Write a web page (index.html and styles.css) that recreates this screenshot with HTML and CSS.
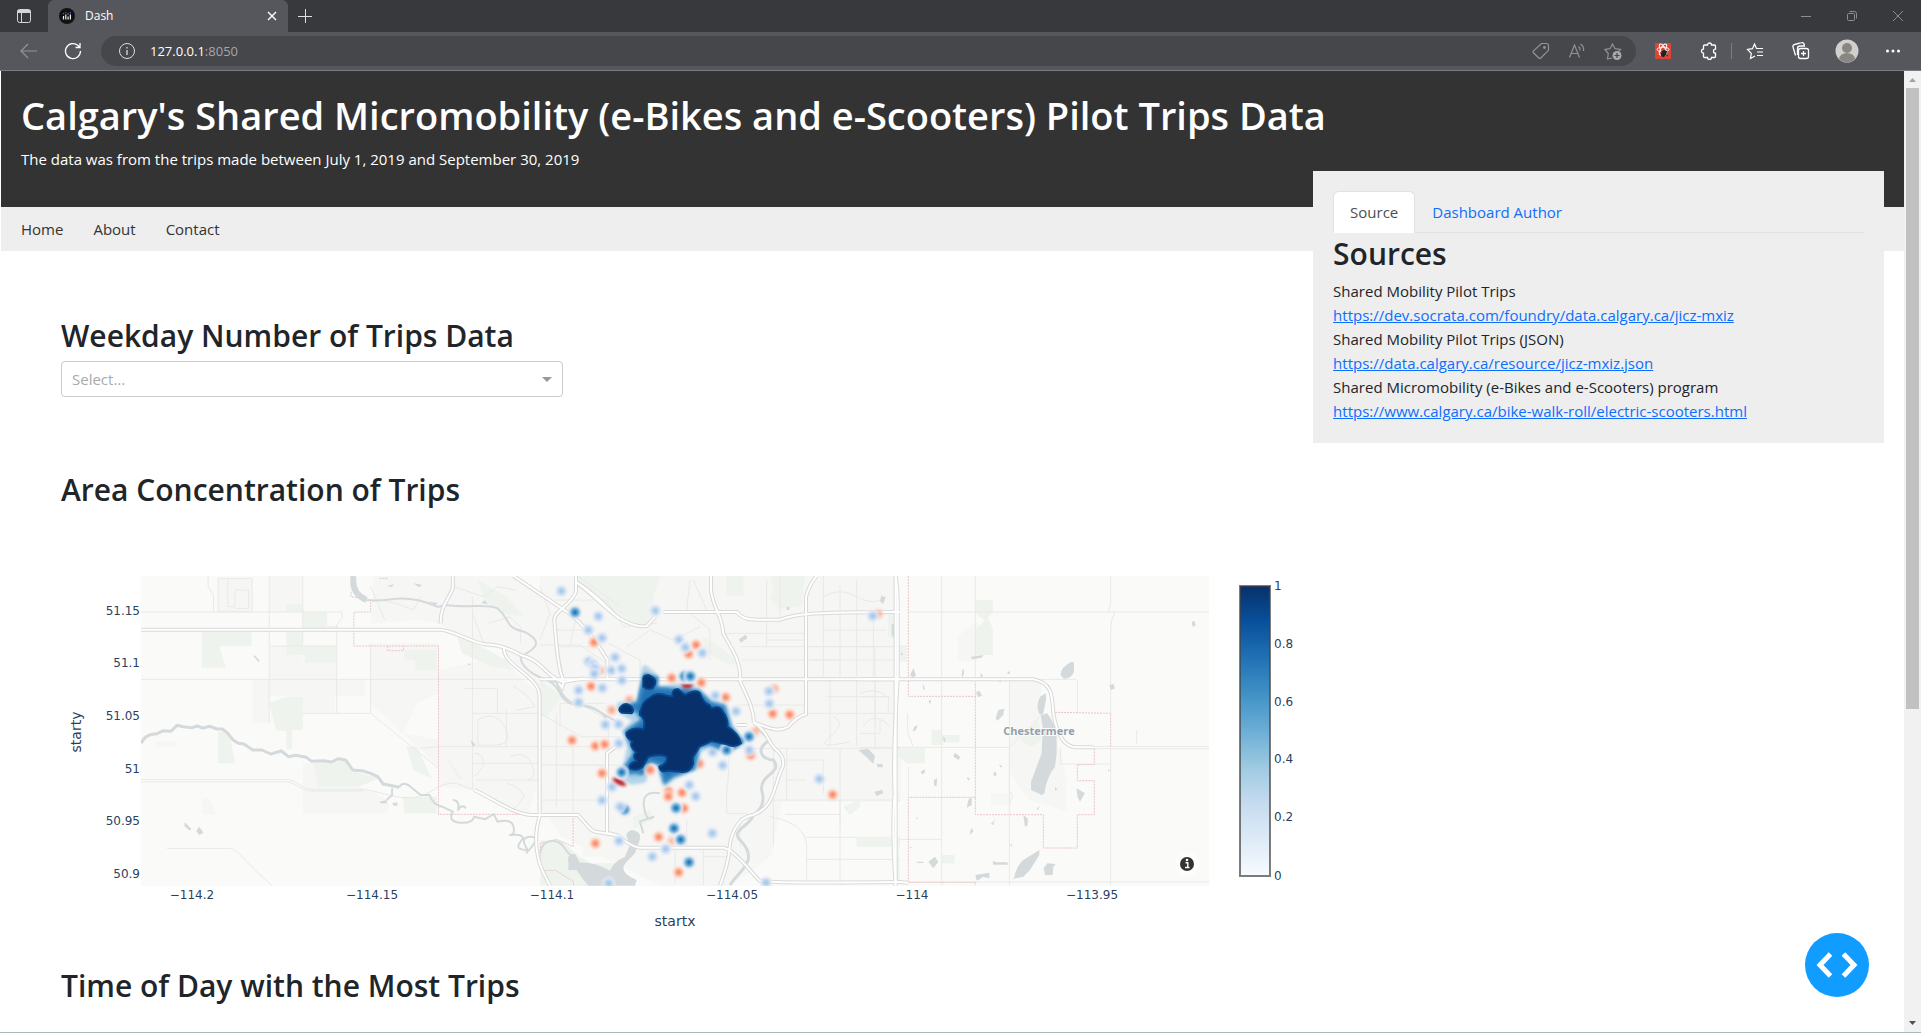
FILE: index.html
```html
<!DOCTYPE html>
<html lang="en">
<head>
<meta charset="utf-8">
<title>Dash</title>
<link rel="stylesheet" href="styles.css">
</head>
<body>
<div class="browser">
  <div class="titlebar">
    <button class="tab-menu" aria-label="Tab actions"><svg width="16" height="16" viewBox="0 0 16 16" fill="none" stroke="#d6d6d6"><rect x="1.500" y="1.500" width="13" height="13" rx="2"/><path d="M2 2.500h12v2H2z" fill="#d6d6d6"/><path d="M5.500 5v9"/></svg></button>
    <div class="tab">
      <svg width="16" height="16" viewBox="0 0 16 16"><circle cx="8" cy="8" r="8" fill="#111"/><path d="M4.500 8v3.500M6.800 6.500v5M9.100 8.500v3M11.400 6.500v5" stroke="#eee" stroke-width="1.200"/><path d="M4.500 5.200v1M6.800 4.200v1" stroke="#d65a86" stroke-width="1.200"/><path d="M9.100 5.200v1.500M11.400 4.200v1" stroke="#7a70e0" stroke-width="1.200"/></svg>
      <span class="tab-name">Dash</span>
      <button class="tab-close" aria-label="Close tab"><svg width="16" height="16" viewBox="0 0 16 16" stroke="#fff" stroke-width="1.400"><path d="M4 4l8 8M12 4l-8 8"/></svg></button>
    </div>
    <button class="new-tab" aria-label="New tab"><svg width="16" height="16" viewBox="0 0 16 16" stroke="#e0e0e0"><path d="M8.500 1v14M1 8.500h14"/></svg></button>
    <div class="window-buttons">
      <button aria-label="Minimize"><svg width="12" height="12" viewBox="0 0 12 12" stroke="#8d8e91"><path d="M1 6.500h10"/></svg></button>
      <button aria-label="Restore"><svg width="12" height="12" viewBox="0 0 12 12" fill="none" stroke="#8d8e91"><rect x="1.500" y="3.500" width="7" height="7" rx="1"/><path d="M3.500 1.500h5a2 2 0 0 1 2 2v5"/></svg></button>
      <button aria-label="Close"><svg width="12" height="12" viewBox="0 0 12 12" stroke="#8d8e91"><path d="M1 1l10 10M11 1L1 11"/></svg></button>
    </div>
  </div>
  <div class="toolbar">
    <button class="nav-button" aria-label="Back"><svg width="18" height="18" viewBox="0 0 18 18" fill="none" stroke="#939498" stroke-width="1.200"><path d="M17 9H1M8 2L1 9l7 7"/></svg></button>
    <button class="nav-button" aria-label="Refresh"><svg width="18" height="18" viewBox="0 0 18 18" fill="none" stroke="#fff" stroke-width="1.300"><path d="M16.500 9A7.500 7.500 0 1 1 14 3.500L16 5.500M16 1v4.500h-4.500"/></svg></button>
    <div class="address">
      <svg width="18" height="18" viewBox="0 0 18 18" fill="none" stroke="#dcdcdc"><circle cx="9" cy="9" r="7.500"/><path d="M9 8v5M9 5v1.500" stroke-width="1.300"/></svg>
      <span class="url">127.0.0.1<span class="port">:8050</span></span>
      <button class="address-button" aria-label="Shopping"><svg width="18" height="18" viewBox="0 0 18 18" fill="none" stroke="#929396" stroke-width="1.200"><path d="M9.500 1.500h5a2 2 0 0 1 2 2v4.800L8.800 16a1.500 1.500 0 0 1-2 0L1.500 10.800a1.500 1.500 0 0 1 0-2z"/><circle cx="12.500" cy="5.500" r=".8" fill="#929396"/></svg></button>
      <button class="address-button" aria-label="Read aloud"><svg width="18" height="18" viewBox="0 0 18 18" fill="none" stroke="#929396" stroke-width="1.200"><path d="M1.500 15.500L6.500 3l5 12.500M3.200 11.500h6.600M10.500 4.500a4 4 0 0 1 1.500 4M12.500 2a7 7 0 0 1 3 7"/></svg></button>
      <button class="address-button" aria-label="Add favorite"><svg width="18" height="18" viewBox="0 0 18 18"><path d="M8 16l-4.500 1 .8-5.500L1 7.500l5-.8L8.500 2 11 6.700l5.500.8-2 2" fill="none" stroke="#929396" stroke-width="1.200"/><circle cx="13" cy="13.500" r="4.500" fill="#a7a8aa"/><path d="M10.500 13.500h5M13 11v5" stroke="#46474b" stroke-width="1.200"/></svg></button>
    </div>
    <button class="tool-button" aria-label="React extension"><svg width="16" height="16" viewBox="0 0 16 16"><path d="M0 0h16v16H0z" fill="#db4535"/><g fill="none" stroke="#fff"><ellipse cx="8" cy="6.500" rx="6" ry="2.300"/><ellipse cx="8" cy="6.500" rx="6" ry="2.300" transform="rotate(60 8 6.500)"/><ellipse cx="8" cy="6.500" rx="6" ry="2.300" transform="rotate(120 8 6.500)"/></g><ellipse cx="9" cy="10.500" rx="2.600" ry="3.600" fill="#222" transform="rotate(25 9 10)"/><path d="M6 8l7 5M12 8l-5 6" stroke="#222"/></svg></button>
    <button class="tool-button puzzle" aria-label="Extensions"><svg width="18" height="18" viewBox="0 0 18 18" fill="none" stroke="#fff" stroke-width="1.300"><path d="M4.500 3h3a2 2 0 0 1 4 0h3a1 1 0 0 1 1 1v3.200a2 2 0 1 0 0 4v3.300a1 1 0 0 1-1 1h-3a2 2 0 0 1-4 0h-3a1 1 0 0 1-1-1v-3.300a2 2 0 0 1 0-4V4a1 1 0 0 1 1-1z"/></svg></button>
    <button class="tool-button" aria-label="Favorites"><svg width="18" height="18" viewBox="0 0 18 18" fill="none" stroke="#fff" stroke-width="1.200"><path d="M9 14l-4.500 2.500.8-5L1.500 7.500l5-.8L8.500 2l2 4.500h6.500M11 10h6M11 13.500h6"/></svg></button>
    <button class="tool-button" aria-label="Collections"><svg width="20" height="20" viewBox="0 0 20 20" fill="none" stroke="#fff" stroke-width="1.300"><path d="M4.500 14.500L2 6a2 2 0 0 1 1.500-2.500l7-1.800A2 2 0 0 1 13 3l.5 1.500M6.500 14V7.500a2.500 2.500 0 0 1 2.500-2.500h5"/><rect x="7.500" y="7.500" width="10" height="10" rx="2"/><path d="M12.500 10v5M10 12.500h5"/></svg></button>
    <button class="tool-button" aria-label="Profile"><svg width="24" height="24" viewBox="0 0 24 24"><circle cx="12" cy="12" r="11.500" fill="#d2d0ce"/><circle cx="12" cy="9" r="5" fill="#8a8681"/><path d="M4 20a8 6 0 0 1 16 0 11.500 11.500 0 0 1-16 0z" fill="#8a8681"/></svg></button>
    <button class="tool-button" aria-label="Settings and more"><svg width="16" height="16" viewBox="0 0 16 16" fill="#fff"><circle cx="2.500" cy="8" r="1.500"/><circle cx="8" cy="8" r="1.500"/><circle cx="13.500" cy="8" r="1.500"/></svg></button>
  </div>

  <div class="viewport">
    <main class="page">
      <header class="banner">
        <h1>Calgary's Shared Micromobility (e-Bikes and e-Scooters) Pilot Trips Data</h1>
        <p>The data was from the trips made between July 1, 2019 and September 30, 2019</p>
      </header>
      <nav class="menu"><a href="#home">Home</a><a href="#about">About</a><a href="#contact">Contact</a></nav>

      <aside class="source-card">
        <div class="card-tabs"><a class="active" href="#source">Source</a><a href="#author">Dashboard Author</a></div>
        <h2>Sources</h2>
        <p>Shared Mobility Pilot Trips</p>
        <p><a href="https://dev.socrata.com/foundry/data.calgary.ca/jicz-mxiz">https://dev.socrata.com/foundry/data.calgary.ca/jicz-mxiz</a></p>
        <p>Shared Mobility Pilot Trips (JSON)</p>
        <p><a href="https://data.calgary.ca/resource/jicz-mxiz.json">https://data.calgary.ca/resource/jicz-mxiz.json</a></p>
        <p>Shared Micromobility (e-Bikes and e-Scooters) program</p>
        <p><a href="https://www.calgary.ca/bike-walk-roll/electric-scooters.html">https://www.calgary.ca/bike-walk-roll/electric-scooters.html</a></p>
      </aside>

      <div class="content">
        <section class="weekday">
          <h2><label for="weekday">Weekday Number of Trips Data</label></h2>
          <select id="weekday" class="dropdown"><option>Select...</option></select>
        </section>
        <section>
          <h2>Area Concentration of Trips</h2>
          <svg class="chart" viewBox="61 515 1300 452" width="1300" height="452" role="img" aria-label="Density map of trip starts">
            <defs>
              <linearGradient id="blues" x1="0" y1="1" x2="0" y2="0"><stop offset="0" stop-color="#f7fbff"/><stop offset=".125" stop-color="#deebf7"/><stop offset=".25" stop-color="#c6dbef"/><stop offset=".375" stop-color="#9ecae1"/><stop offset=".5" stop-color="#6baed6"/><stop offset=".625" stop-color="#4292c6"/><stop offset=".75" stop-color="#2171b5"/><stop offset=".875" stop-color="#08519c"/><stop offset="1" stop-color="#08306b"/></linearGradient>
              <radialGradient id="low"><stop offset="0" stop-color="#a0c6e6"/><stop offset=".3" stop-color="#b4d0ed" stop-opacity=".9"/><stop offset=".65" stop-color="#dce7f8" stop-opacity=".75"/><stop offset="1" stop-color="#f3eff4" stop-opacity="0"/></radialGradient>
              <radialGradient id="mid"><stop offset="0" stop-color="#1b6aaf"/><stop offset=".3" stop-color="#529dcc"/><stop offset=".55" stop-color="#a6cce9"/><stop offset=".75" stop-color="#e0e8f6" stop-opacity=".7"/><stop offset="1" stop-color="#fbe6df" stop-opacity="0"/></radialGradient>
              <radialGradient id="hot"><stop offset="0" stop-color="#fa8161"/><stop offset=".35" stop-color="#fca488" stop-opacity=".9"/><stop offset=".7" stop-color="#fdd9cb" stop-opacity=".6"/><stop offset="1" stop-color="#fdece4" stop-opacity="0"/></radialGradient>
              <filter id="soft" x="-20%" y="-20%" width="140%" height="140%"><feGaussianBlur stdDeviation="4"/></filter>
              <clipPath id="frame"><path d="M0 0h1068v310H0z"/></clipPath>
              <circle id="l" r="24" fill="url(#low)"/><circle id="m" r="26" fill="url(#mid)"/><circle id="h" r="24" fill="url(#hot)"/>
              <g id="major">
                <g transform="scale(.35714 .33333) translate(-227 -48)"><path d="M227 209H1065C1105 212 1140 243 1190 253Q1240 254 1290 285C1350 300 1360 350 1408 366L1470 355M1100 48V85C1085 125 1065 140 1066 190M1243 262C1240 320 1343 345 1343 410V770C1325 830 1335 890 1350 930L1372 977M1270 48L1405 145C1460 180 1500 240 1533 300V357L1600 358M1445 48V95C1430 140 1385 150 1384 180C1390 240 1392 320 1411 365L1406 383L1398 371M1160 690C1220 720 1265 760 1320 765L1450 765C1475 790 1485 815 1500 815L1568 827M1445 66C1490 100 1530 150 1568 175M1568 550L1532 580V820"/></g>
                <g transform="translate(399 -16) scale(.33333)"><path d="M108 66C150 90 190 130 230 170C270 195 300 202 320 198L346 170M370 156H590C610 180 625 180 720 179C760 165 780 156 1080 156M513 48V90C520 150 545 160 550 220C570 260 605 300 601 365C620 410 640 440 642 488M0 358H1080M642 488C690 520 680 550 715 575Q735 595 728 620C700 680 705 740 640 765C590 770 570 830 568 870Q565 910 540 977M568 870C610 900 640 945 660 963Q700 970 1080 966M205 820C240 820 265 862 300 863H550L568 870M620 495H590M642 488C680 500 710 520 745 500Q770 470 798 462V110Q810 70 830 48M1067 48V977"/></g>
                <g transform="translate(719 -16) scale(.33333)"><path d="M107 48Q115 100 113 155V358Q98 600 104 700Q95 800 107 977M0 358H520C580 370 576 410 580 460C590 520 610 562 650 562H700M107 965L145 968"/></g>
              </g>
            </defs>

            <g transform="translate(141 576)" clip-path="url(#frame)">
              <path d="M0 0h1068v310H0z" fill="#fafaf8"/>
              <g class="urban">
                <g transform="scale(.35714 .33333) translate(-227 -48)"><path d="M443 55h95v100h-95zM586 258h94v40h95v60h80v50h-85v50h-90v-50h-94zM586 48h94v108h-94zM680 610h60l60 60 60 20 60 30v40H680zM540 360h46v130h-46zM398 715h20l18 48h-38zM268 545h60l-8 15h-52zM870 250H1060V400L1000 430 960 520 1060 540V620L1000 560 870 430zM880 48H1270L1400 145 1380 180 1395 350 1340 380 1240 270 1190 250 1080 205 1060 190 1000 180 870 190zM1060 330L1230 290 1340 400V660L1310 765H1280L1160 690 1060 680zM1345 400L1568 480V830H1500L1450 765 1345 750zM1465 820h103v70h-103z"/></g>
                <path d="M399 0H570L660 130 630 280 590 310H520L420 260 399 230zM570 0H756V226H700L640 170 600 170V130zM600 170H760V226H640zM868 105h32v30q20 30 25 70v30l-35-10q-10-10-22-30zM850 217h20v12h-20zM817 60l20-15v40h-20z"/>
              </g>
              <g class="parks">
                <g transform="scale(.35714 .33333) translate(-227 -48)"><path d="M397 215H537V258H445L465 323H397zM634 132h46v24h-46zM680 156h68v42h30v17h-98zM634 215h46v43h94v50h-88v-24h-52zM586 430l48-20h46v100h-30v56h-16v-54h-28zM443 515h30l18 95h-48zM710 610L800 600l25 35 70 20-60 25h-110zM1110 220l140 80 20 30-60-10-85-40zM1170 60l80 50 50 60-60-10-50-40zM970 560h30l40 95-50-25zM960 710h95v50h-90zM1345 840l60 10 30 60 133 0v67H1345zM1080 590l50 70-15-5zM965 270h90v60h-60v-30h-30zM1345 360l60 50-40 60-20-5z"/></g>
                <g transform="translate(399 -16) scale(.33333)"><path d="M115 48H360L340 110Q345 150 320 195 280 195 250 170 200 140 115 66zM560 48h50v60h-50zM690 48h105l-10 90-65 10-30-30 10-30zM490 230q70 40 105 80l-20 5q-50-15-85-50zM280 770l50-20 10 30-60 25zM910 740l50-20v20l-30 25zM950 830h130v30H950zM0 860l60-20 60 50 80 50-50 37H30z"/></g>
                <g transform="translate(719 -16) scale(.33333)"><path d="M346 120h52v40l-15 15 15 30v80h-50v-78l25-25-27-25zM115 255h26v50h-26zM215 510h30v45h-30zM245 525h53v22h-53zM115 565h80v45h-55l-25-20zM0 840h110v20H0zM245 885h38v25h-38zM480 540l20-30 35-30 10 60-30 20zM85 160h20v80l-20-10zM105 860h10l5 100h-10z"/></g>
              </g>
              <g class="streets">
                <g transform="scale(.35714 .33333) translate(-227 -48)"><path d="M415 48V80L430 105V155M443 55h95v100h-95zM470 55v85h20V90h38v55h-38M227 156H790V175L775 195V460M586 48V490M680 48V250M227 358H1330M586 258H775M680 460H870V250M870 460L1060 625M227 659H640C670 665 680 690 710 688H850C900 695 930 715 990 714C1050 700 1060 665 1110 670L1160 690M227 666H637C665 670 675 695 710 693H850M300 865H480C510 880 520 910 595 977M1155 110V690M1155 460H1340M1010 565L1060 560H1340M1155 610H1340M1130 385H1225V460M1250 450V560M1165 660H1340M1390 460V740M1437 560V760M1343 460L1460 530H1568M1343 560H1500M1390 615H1568M1450 48L1568 140M1390 210H1500M1400 260H1500M1155 160L1190 260M1170 480q50-30 75 20t-20 55H1170zM1160 580q30 0 25 40l-25 30M1260 590q40-20 60 20t-10 50M1250 670q40 10 50 40l-30 40M1270 380q40 20 60 60l-50 10M1200 190l60-20 30 30v50M870 80l40 100M900 120q50 10 90 30l20-40M1105 80l80 30 40-30 50 10"/></g>
                <g transform="translate(399 -16) scale(.33333)"><path d="M0 255H120L200 310M45 120H200L250 200 350 190M110 160L90 260M200 430H60V500M205 570V480L100 420M0 615H205M0 720H205V820M205 250L300 300V365M260 260L330 210 400 240 480 200M450 60L440 150 510 210V300M460 60L500 150M545 220H800M600 260H1000M605 300H900M600 435H800M560 565H1080M565 565Q570 620 560 700V760H620M405 860V970M490 860V977M440 780V860M700 565V860M740 565V720M735 763H900M740 660H800M700 720H1080M690 770Q800 790 800 860V970M800 832H950M900 565V977M900 720V800M800 898H1080M680 240H800M680 60V260M720 48V180M850 48V350M900 80V350M950 60V350M1000 160V350M850 110Q900 80 950 110T1040 110M850 210H1040M810 260H1060M820 300H1060M870 360V560M950 360V560M1005 360V560M800 460H1060M860 410H1050M880 470Q920 490 870 530T930 545M960 400Q1010 380 1040 410M970 500Q1000 450 1050 500M740 600H850V700M0 80L30 160 0 240M600 770V860M490 890H560"/></g>
                <g transform="translate(719 -16) scale(.33333)"><path d="M145 156H1047M245 48V838M346 48V370M448 365V977M752 48V130L745 156M765 156Q750 180 752 210V460M652 360V460M540 358H650M0 562H448L540 470M120 838H245V977M145 966H1047M752 565V977M602 565V612H752M143 460V520L160 560M448 565V690L458 710 448 730M830 510V550M145 712V620M0 260H100M45 260V500M0 520H60V480M0 410H85V460M690 559H1047M690 566H1047"/></g>
              </g>
              <g class="city-limit">
                <g transform="scale(.35714 .33333) translate(-227 -48)"><path d="M815 95V110L870 120V156H823V258H1060V763H1290M918 258V272L962 272V258M895 55H920M1437 765V860L1390 838 1345 850V905M1350 931H1388L1438 965V977"/></g>
                <g transform="translate(719 -16) scale(.33333)"><path d="M145 48V409H346V370M346 409V764H550V864H652V764H703V662H652V614H703V565M346 712H145V967H346V977M585 457L752 460V560"/></g>
              </g>
              <g class="rivers">
                <g transform="scale(.35714 .33333) translate(-227 -48)">
                  <path class="wide" d="M822 48Q815 100 858 120"/>
                  <path d="M858 120C920 128 935 105 1000 120S1040 148 1080 135C1150 145 1195 130 1225 145C1265 180 1240 200 1300 215C1355 245 1335 265 1290 290C1290 330 1350 360 1390 366C1400 400 1420 425 1450 435C1500 440 1530 470 1568 490"/>
                  <path class="medium" d="M227 550Q240 520 270 522L290 512 310 514 328 496 345 500 370 503 385 498 400 504 420 499 440 507 455 507 470 520 485 540 500 550 515 552 540 570 565 570 590 582 620 573 640 590 660 586 690 592 705 604 740 602 760 606 780 596 800 600 820 630 845 632 870 640 890 650 905 672 930 677 950 682"/>
                  <path d="M950 682Q960 660 985 683L1010 705 1035 705Q1045 735 1070 740L1100 755Q1085 785 1120 788T1160 770L1190 778 1215 762 1225 785Q1265 775 1270 800T1260 825Q1310 820 1290 845T1310 870Q1285 830 1318 830T1305 880M1345 880Q1350 840 1385 843C1420 850 1410 885 1445 890M1100 720q20 0 15 30 10-20 22-5M930 685v20l-15 15"/>
                </g>
                <g transform="translate(399 -16) scale(.33333)">
                  <path d="M0 355Q40 360 60 400T130 435Q170 440 200 475M360 700Q305 690 312 740T340 770L300 785 310 820"/>
                  <path class="medium" d="M648 500L690 540C640 570 670 600 700 600C730 640 660 640 665 690Q680 740 640 765C630 800 570 810 600 840C660 900 600 930 570 975"/>
                </g>
              </g>
              <g class="lakes">
                <g transform="scale(.35714 .33333) translate(-227 -48)"><path d="M350 787l18 20-5 5-15-15zM390 800l12 18-12 7-8-12zM545 285l15 18-5 2-12-15zM895 725l20-5v10h-18zM930 730l15-3v10h-10zM915 78l20-5-5 8zM990 70l25 5-10 7zM1030 125l28 3-5 8zM1180 130l10-10 8 12zM1150 540l15 15-10 5zM1142 310l10 3-8 3z"/></g>
                <g transform="translate(399 -16) scale(.33333)"><path d="M85 905Q80 880 105 882L120 908Q160 905 210 932Q220 905 255 890L272 850Q245 820 275 810Q310 815 297 845L285 880 260 905Q230 935 290 960L285 977H145Q125 955 110 930L85 930zM597 238l20-14 5 10-20 15zM955 570l30-3 20 20-5 25-20-20zM1010 612h18v10h-15zM1003 695l22-5 5 10-20 8zM1025 105l10 15-8 12-7-10zM740 140h8v10h-8zM1055 190l8 5v40l-8-10z"/></g>
                <g transform="translate(719 -16) scale(.33333)"><path d="M602 345Q602 320 635 305L642 308V335Q635 355 612 357zM540 465Q525 440 540 410L558 400V420L550 460zM542 465L562 460 575 480 590 510V580L585 620Q560 650 553 700L545 705 513 690V665L530 620 545 580 548 500zM407 475L415 450 433 446 430 465 412 482zM460 960Q470 915 490 900L538 870V885L510 930 490 950 465 955zM551 925L562 910 587 912 580 920 578 945 555 945zM650 685L675 700 660 725 652 710zM347 955V945L388 938V955L370 950 352 962zM398 902l10 5h35v7h-43zM490 765L503 775V795L495 800zM348 397l10-5 8 15-12 5zM748 375l12-3 5 13-12 5zM995 185l8-2 5 13-10 5zM150 345l10-20 8 20-8 10zM333 290l37-5-5 8-30 5zM362 338l7 10-7 6zM440 340l10-8v10zM417 365l5-15v18zM305 345l3-20 5 10-5 18zM187 370l8 15-4 8zM205 425l7-7v15zM158 515l5-15 10-5-5 15zM248 530l8 5-2 15zM280 590l5-12 15 12-3 10zM182 635l12-8v12l-8 4zM222 660l10-5-3 25-7-5zM320 652l10 3-5 8zM325 720l10-10v25l-15 8zM400 640l5-6 5 10-7 6zM417 613l10 5-5 5zM585 680l7 8-7 5zM530 745l10-6-7 12zM400 785l5-12-5 22-8-3zM330 815l5-12 5 10-10 12zM168 773l5-2v8zM450 852l8 3-4 5zM148 860l9 2-7 3zM170 905l20 0v4h-18zM205 905l20-15 10 15-15 20zM210 890h20M743 628l7 2-4 5zM120 285l8-10v10zM64 110l12 0-5 20zM50 700l18-10v10z"/></g>
              </g>
              <g class="road-edge"><use href="#major"/></g>
              <g class="road"><use href="#major"/></g>
              <text class="town" x="898" y="159" text-anchor="middle">Chestermere</text>

              <g transform="translate(399 -16) scale(.33333)">
                <g><use href="#h" x="162" y="247"/><use href="#h" x="153" y="379"/><use href="#h" x="96" y="541"/><use href="#h" x="166" y="558"/><use href="#h" x="194" y="553"/><use href="#h" x="186" y="640"/><use href="#h" x="166" y="850"/><use href="#h" x="468" y="255"/><use href="#h" x="446" y="282"/><use href="#h" x="395" y="354"/><use href="#h" x="484" y="368"/><use href="#h" x="557" y="412"/><use href="#h" x="698" y="461"/><use href="#h" x="749" y="464"/><use href="#h" x="704" y="386" opacity=".6"/><use href="#h" x="478" y="611"/><use href="#h" x="386" y="694"/><use href="#h" x="385" y="710"/><use href="#h" x="426" y="698"/><use href="#h" x="432" y="745"/><use href="#h" x="356" y="831"/><use href="#h" x="395" y="843" opacity=".5"/><use href="#h" x="416" y="937"/><use href="#h" x="878" y="704"/><use href="#h" x="632" y="586"/><use href="#h" x="645" y="515" opacity=".6"/><use href="#h" x="215" y="450" opacity=".7"/><use href="#h" x="268" y="420" opacity=".7"/><use href="#h" x="1015" y="162" opacity=".6"/><use href="#h" x="183" y="332" opacity=".5"/></g>
                <g><use href="#l" x="64" y="93"/><use href="#l" x="175" y="169"/><use href="#l" x="145" y="210"/><use href="#l" x="186" y="234"/><use href="#l" x="146" y="304"/><use href="#l" x="160" y="314"/><use href="#l" x="165" y="326"/><use href="#l" x="163" y="342"/><use href="#l" x="225" y="292"/><use href="#l" x="214" y="331"/><use href="#l" x="245" y="326"/><use href="#l" x="246" y="361"/><use href="#l" x="187" y="384"/><use href="#l" x="116" y="391"/><use href="#l" x="116" y="427"/><use href="#l" x="196" y="494"/><use href="#l" x="236" y="493"/><use href="#l" x="237" y="550"/><use href="#l" x="346" y="152"/><use href="#l" x="417" y="239"/><use href="#l" x="436" y="262"/><use href="#l" x="487" y="279"/><use href="#l" x="526" y="407"/><use href="#l" x="588" y="454"/><use href="#l" x="687" y="394"/><use href="#l" x="688" y="431"/><use href="#l" x="998" y="168"/><use href="#l" x="838" y="657"/><use href="#l" x="628" y="570"/><use href="#l" x="518" y="576"/><use href="#l" x="548" y="616"/><use href="#l" x="448" y="675"/><use href="#l" x="467" y="709"/><use href="#l" x="216" y="681"/><use href="#l" x="186" y="721"/><use href="#l" x="237" y="843"/><use href="#l" x="517" y="820"/><use href="#l" x="377" y="867"/><use href="#l" x="337" y="890"/><use href="#l" x="206" y="970"/><use href="#l" x="678" y="968"/></g>
                <g><use href="#m" x="105" y="157"/><use href="#m" x="408" y="744"/><use href="#m" x="402" y="805"/><use href="#m" x="422" y="839"/><use href="#m" x="447" y="907"/><use href="#m" x="254" y="749"/><use href="#l" x="240" y="740"/><use href="#m" x="627" y="530"/></g>
                <path class="heat-edge" filter="url(#soft)" d="M315 325L345 350 350 390 405 380 440 380 470 390 510 425 555 440 570 500 605 545 565 570 510 555 475 570 465 620 400 650 375 670 355 610 330 600 310 660 275 665 240 640 260 610 270 560 255 515 290 480 245 455 240 435 300 430z"/>
                <path class="heat-mid" filter="url(#soft)" d="M315 345L350 355 345 385 405 390 475 395 510 430 550 440 568 500 605 545 565 572 510 550 475 560 460 625 400 645 375 665 360 610 330 600 305 640 285 635 245 640 285 580 260 515 310 480 290 450 245 445 295 430z"/>
                <use href="#h" x="331" y="630"/>
                <path filter="url(#soft)" d="M215 655q28-5 45 22-25 6-45-22zM422 373h40l-12 12h-18z" fill="#b91f2c"/>
                <use href="#m" x="433" y="349"/><use href="#m" x="451" y="349"/><use href="#m" x="245" y="637"/><use href="#m" x="560" y="570"/>
                <path class="heat-core" d="M310 360Q308 345 325 345Q350 355 345 372L338 385Q320 390 310 380zM243 440Q255 425 272 438Q285 450 275 460L245 458Q232 450 243 440zM300 455C310 440 300 430 330 413Q350 395 380 407L398 410Q395 385 415 388L435 405Q470 385 480 400Q490 430 508 435L515 445Q540 435 548 455Q565 475 562 500Q595 520 603 550Q585 565 560 553L515 543 478 560 465 582Q455 590 460 610Q450 640 420 635L385 632Q360 640 358 620Q385 610 380 590Q360 580 325 590L308 620Q290 635 270 625Q265 610 290 603Q275 585 290 578Q265 555 278 545Q255 530 260 518Q280 500 310 508Q320 480 300 465z"/>
              </g>
              <circle cx="1046" cy="288" r="12" fill="#fff" opacity=".6"/><circle cx="1046" cy="288" r="7" fill="#333"/><path d="M1044.500 286.800h2.300v4.500M1044 291.500h4.500" fill="none" stroke="#fff" stroke-width="1.400"/><circle cx="1046" cy="284" r="1.300" fill="#fff"/>
            </g>

            <g class="tick" text-anchor="end"><text x="140" y="615">51.15</text><text x="140" y="667">51.1</text><text x="140" y="720">51.05</text><text x="140" y="773">51</text><text x="140" y="825">50.95</text><text x="140" y="878">50.9</text></g>
            <g class="tick" text-anchor="middle"><text x="192" y="899">−114.2</text><text x="372" y="899">−114.15</text><text x="552" y="899">−114.1</text><text x="732" y="899">−114.05</text><text x="912" y="899">−114</text><text x="1092" y="899">−113.95</text></g>
            <g class="axis-title" text-anchor="middle"><text x="675" y="926">startx</text><text transform="translate(81 732) rotate(-90)">starty</text></g>
            <rect x="1240" y="586" width="30" height="290" fill="url(#blues)" stroke="#444" stroke-opacity=".7" stroke-width="2"/>
            <g class="tick"><text x="1274" y="590">1</text><text x="1274" y="648">0.8</text><text x="1274" y="706">0.6</text><text x="1274" y="763">0.4</text><text x="1274" y="821">0.2</text><text x="1274" y="880">0</text></g>
          </svg>
        </section>
        <section><h2>Time of Day with the Most Trips</h2></section>
      </div>
    </main>
    <div class="scrollbar">
      <svg width="17" height="17" viewBox="0 0 17 17"><path d="M5 11l3.500-4L12 11z" fill="#a3a3a3"/></svg>
      <div class="track"><div class="thumb"></div></div>
      <svg width="17" height="17" viewBox="0 0 17 17"><path d="M5 6l3.500 4L12 6z" fill="#505050"/></svg>
    </div>
    <button class="debug" aria-label="Developer tools"><svg width="44" height="28" viewBox="0 0 44 28" fill="none" stroke="#fff" stroke-width="5"><path d="M15.500 3L5 14l10.500 11M28.500 3L39 14 28.500 25"/></svg></button>
  </div>
</div>
</body>
</html>
```

FILE: styles.css
```css
* { box-sizing: border-box; }

body {
  margin: 0;
  font: 15px/24px "Open Sans", "Noto Sans", sans-serif;
  color: #212529;
  background: #fff;
}

h1, h2, p { margin: 0; }
h1, h2 { font-weight: 600; }
h2 { font-size: 30px; line-height: 38px; margin-bottom: 6px; }
button { border: 0; padding: 0; background: none; }
svg { display: block; flex: none; }

.browser {
  display: flex;
  flex-direction: column;
  height: 100vh;
  border-bottom: 1px solid #a9b7ba;
}

/* Tab strip */
.titlebar { display: flex; height: 32px; background: #38393d; color: #fff; }
.titlebar button { display: flex; align-items: center; justify-content: center; }
.tab-menu { width: 48px; }
.tab {
  display: flex;
  align-items: center;
  width: 240px;
  padding: 0 8px 0 11px;
  gap: 10px;
  background: #56575c;
  border-radius: 6px 6px 0 0;
  font-size: 12px;
}
.tab-name { flex: 1; }
.new-tab { width: 34px; }
.window-buttons { display: flex; margin-left: auto; }
.window-buttons button { width: 46px; }

/* Address row */
.toolbar {
  display: flex;
  align-items: center;
  height: 39px;
  padding: 0 5px 0 7px;
  background: #56575c;
  border-bottom: 1px solid #7a7a82;
}
.toolbar button { display: flex; align-items: center; justify-content: center; }
.nav-button { width: 44px; height: 30px; }
.address {
  display: flex;
  align-items: center;
  flex: 1;
  height: 30px;
  margin: 0 4px 0 6px;
  padding: 0 5px 0 17px;
  border-radius: 15px;
  background: #46474b;
  color: #fff;
  font-size: 13px;
}
.url { flex: 1; margin-left: 14px; }
.port { color: #a5a6a9; }
.address-button { width: 36px; }
.tool-button { width: 46px; height: 30px; }
.puzzle { position: relative; }
.puzzle::after { content: ""; position: absolute; right: 0; top: 7px; width: 1px; height: 16px; background: #7c7d82; }

/* Page */
.viewport { position: relative; display: flex; flex: 1; min-height: 0; padding-left: 1px; }
.page { position: relative; flex: 1; min-width: 0; overflow: hidden; }
.banner { height: 136px; padding: 20px; background: #333; color: #fff; }
.banner h1 { margin-bottom: 8px; font-size: 38px; line-height: 48px; white-space: nowrap; }
.banner p { font-weight: 500; }
.menu { display: flex; gap: 30px; padding: 10px 20px; background: #eee; }
.menu a { color: #333; text-decoration: none; }

.source-card {
  position: absolute;
  top: 100px;
  right: 20px;
  width: 30%;
  padding: 20px;
  background: #eee;
}
.source-card a { color: #0d6efd; }
.card-tabs { display: flex; margin-bottom: 2px; border-bottom: 1px solid #dee2e6; }
.card-tabs a {
  margin-bottom: -1px;
  padding: 8px 16px;
  border: 1px solid transparent;
  border-radius: 6px 6px 0 0;
  text-decoration: none;
}
.card-tabs .active { color: #495057; background: #fff; border-color: #dee2e6 #dee2e6 #fff; }

.content { padding: 66px 60px 0; }
.weekday { margin-bottom: 74px; }
.dropdown {
  display: block;
  width: 502px;
  max-width: 100%;
  height: 36px;
  padding: 0 10px;
  border: 1px solid #ccc;
  border-radius: 4px;
  appearance: none;
  color: #aaa;
  font: inherit;
  background: #fff url("data:image/svg+xml,%3Csvg xmlns='http://www.w3.org/2000/svg' width='10' height='5'%3E%3Cpath d='M0 0h10L5 5z' fill='%23999'/%3E%3C/svg%3E") no-repeat right 10px center;
}

/* Map */
.chart path { vector-effect: non-scaling-stroke; }
.urban { fill: #f6f6f4; }
.parks { fill: #eef3ee; }
.streets { fill: none; stroke: #e9e9e8; stroke-width: 1; }
.city-limit { fill: none; stroke: #ecc4c8; stroke-width: 1; stroke-dasharray: 2 1; }
.rivers { fill: none; stroke: #d4dadc; stroke-width: 2; stroke-linejoin: round; }
.rivers .medium { stroke-width: 3; }
.rivers .wide { stroke-width: 6; }
.lakes { fill: #d4dadc; }
.road-edge { fill: none; stroke: #d9d9d9; stroke-width: 4; }
.road { fill: none; stroke: #fff; stroke-width: 2; }
.town { font: 700 11px "Open Sans", sans-serif; fill: #93a0ac; stroke: #fafaf8; stroke-width: 2px; paint-order: stroke; }
.heat-edge { fill: #9ecae1; stroke: #b4d4ea; stroke-width: 6; stroke-linejoin: round; }
.heat-mid { fill: #2171b5; stroke: #3585bf; stroke-width: 4; stroke-linejoin: round; }
.heat-core { fill: #08306b; stroke: #08468c; stroke-width: 2; }
.tick, .axis-title { font-family: "DejaVu Sans", Verdana, sans-serif; fill: #2a3f5f; }
.tick { font-size: 12px; }
.axis-title { font-size: 14px; }

.scrollbar { display: flex; flex-direction: column; width: 17px; background: #f1f1f1; }
.track { flex: 1; padding: 0 2px; }
.thumb { height: 67%; background: #c1c1c1; }

.debug {
  position: absolute;
  right: 52px;
  bottom: 35px;
  display: flex;
  align-items: center;
  justify-content: center;
  width: 64px;
  height: 64px;
  border-radius: 50%;
  background: #119dff;
}
```
